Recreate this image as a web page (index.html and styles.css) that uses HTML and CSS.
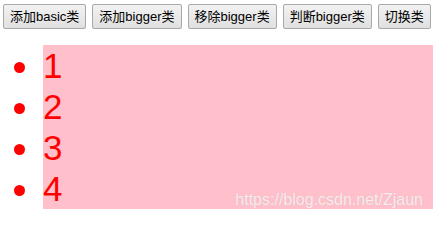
FILE: index.html
```html
<!DOCTYPE html>
<html lang="zh">
<head>
<meta charset="utf-8">
<link rel="stylesheet" href="styles.css">
</head>
<body>
<div class="toolbar">
  <button class="btn">添加basic类</button>
  <button class="btn">添加bigger类</button>
  <button class="btn">移除bigger类</button>
  <button class="btn">判断bigger类</button>
  <button class="btn">切换类</button>
</div>
<ul class="list">
  <li class="item"><span class="label">1</span></li>
  <li class="item"><span class="label">2</span></li>
  <li class="item"><span class="label">3</span></li>
  <li class="item"><span class="label">4</span></li>
</ul>
<div class="watermark">https://blog.csdn.net/Zjaun</div>
</body>
</html>
```
FILE: styles.css
```css
html, body {
  margin: 0;
  padding: 0;
  background: #fff;
}
body {
  position: relative;
  width: 433px;
  height: 220px;
  overflow: hidden;
  font-family: "Liberation Sans", "Noto Sans CJK SC", sans-serif;
}
.toolbar {
  display: flex;
  gap: 6px;
  padding: 4px 0 0 3px;
}
.btn {
  font-family: "Liberation Sans", "Noto Sans CJK SC", sans-serif;
  font-size: 13px;
  line-height: 17px;
  height: 25px;
  padding: 3px 6px;
  color: #000;
  background: linear-gradient(#f2f2f2, #e0e0e0);
  border: 1px solid #a8a8a8;
  border-radius: 2px;
  white-space: nowrap;
}
.list {
  list-style: none;
  margin: 16px 0 0 0;
  padding: 0 0 0 14px;
}
.item {
  display: flex;
  align-items: center;
  height: 41px;
}
.item::before {
  content: "";
  width: 11px;
  height: 11px;
  border-radius: 50%;
  background: #ff0000;
  margin: 3px 18px 0 0;
  flex: none;
}
.label {
  flex: 1;
  height: 41px;
  line-height: 41px;
  background: #ffc0cb;
  color: #ff0000;
  font-size: 35px;
}
.watermark {
  position: absolute;
  right: 10px;
  top: 191px;
  font-size: 16px;
  line-height: 18px;
  color: rgba(255, 255, 255, 0.75);
  text-shadow: 0 0 1px rgba(160, 160, 160, 0.4);
}
```
